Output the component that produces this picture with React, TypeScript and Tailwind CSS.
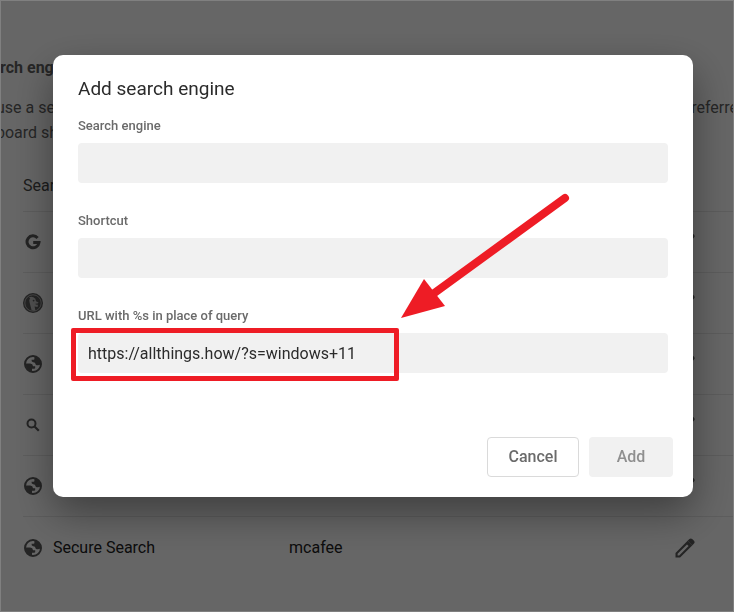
import { useState, type ReactNode } from "react";

interface Engine {
  id: number;
  icon: ReactNode;
  name?: string;
  shortcut?: string;
}

function GoogleIcon() {
  return (
    <svg viewBox="0 0 16 16" className="h-4 w-4" fill="none" stroke="currentColor" strokeWidth="3">
      <path d="M12.6 3.9A6 6 0 1 0 14 8.6H8.2" />
    </svg>
  );
}

function DuckIcon() {
  return (
    <svg viewBox="0 0 20 20" className="h-5 w-5">
      <circle cx="10" cy="10" r="10" fill="currentColor" />
      <circle cx="10" cy="10" r="8.2" fill="none" stroke="#c4c4c4" strokeWidth="0.8" />
      <path
        d="M6 4.6Q8 3.2 10.4 4.2 13 5.2 13 8.2L15.6 9.6Q15.4 10.8 12.2 10.8 12.4 12 15 11.8L14.6 14 11.6 13.6 12.4 17.4Q10.6 18 8.6 17.3L6.6 9.6Q5.6 6.8 7.2 5.6Z"
        fill="#c4c4c4"
      />
      <circle cx="10.6" cy="7.6" r="0.9" fill="currentColor" />
    </svg>
  );
}

function GlobeIcon() {
  return (
    <svg viewBox="0 0 18 18" className="h-[18px] w-[18px]" fill="currentColor">
      <circle cx="9" cy="9" r="8" fill="none" stroke="currentColor" strokeWidth="2" />
      <path d="M1.5 8.6H6.2Q8.9 8.8 9 11.2H11.2V13.2Q10.6 13.9 8 13.8V16.5Q1.5 15.5 1.5 8.6Z" />
      <path d="M10.4 1.5V4.3Q9.8 5 7.5 4.8 7.3 7 9.2 7.2 11.6 7.3 11.6 9.4 13.4 11.2 16.6 9.6 17 3 10.4 1.5Z" />
    </svg>
  );
}

function SearchIcon() {
  return (
    <svg viewBox="0 0 14 14" className="h-3.5 w-3.5" fill="none" stroke="currentColor" strokeWidth="2">
      <circle cx="5.5" cy="5.5" r="4" />
      <path d="M8.5 8.5 12.8 12.8" strokeWidth="2.2" />
    </svg>
  );
}

function PencilIcon() {
  return (
    <svg viewBox="0 0 20 20" className="h-5 w-5" fill="currentColor">
      <path
        fillRule="evenodd"
        d="M0.5 14.9 12.6 2.8 17.2 7.4 5.1 19.5H0.5ZM2.6 15.8V17.4H4.2L13.6 8 12 6.4Z"
      />
      <path d="M12.6 2.8 14.4 1Q15.8-0.2 17.2 1L19 2.8Q20.2 4.2 19 5.6L17.2 7.4Z" />
    </svg>
  );
}

const engines: Engine[] = [
  { id: 1, icon: <GoogleIcon /> },
  { id: 2, icon: <DuckIcon /> },
  { id: 3, icon: <GlobeIcon /> },
  { id: 4, icon: <SearchIcon /> },
  { id: 5, icon: <GlobeIcon /> },
  { id: 6, icon: <GlobeIcon />, name: "Secure Search", shortcut: "mcafee" },
];

function SettingsPage() {
  return (
    <main className="min-h-screen overflow-hidden bg-white pt-14 text-base text-[#5f5f5f]">
      <h1 className="leading-6 font-bold">rch eng</h1>
      <div className="mt-[15px] flex justify-between leading-[25px] whitespace-nowrap">
        <p className="-ml-1">
          use a se
          <br />
          board sh
        </p>
        <p className="-mr-1">referre</p>
      </div>

      <div className="mt-4 pl-[23px]">
        <table className="w-full table-fixed border-separate border-spacing-0 text-left">
          <colgroup>
            <col className="w-[30px]" />
            <col className="w-[236px]" />
            <col />
            <col className="w-[59px]" />
          </colgroup>
          <thead>
            <tr className="*:h-[51px] *:border-b *:border-[#e8e8e8]">
              <th colSpan={2} className="font-normal text-[#484848]">
                Sear
              </th>
              <th />
              <th />
            </tr>
          </thead>
          <tbody className="text-[#222222]">
            {engines.map((engine) => (
              <tr key={engine.id} className="*:h-[61px] *:border-b *:border-[#e8e8e8] last:*:border-b-0">
                <td className="text-[#5a5a5a]">
                  <span className="flex w-5 justify-center *:shrink-0">{engine.icon}</span>
                </td>
                <td>{engine.name}</td>
                <td>{engine.shortcut}</td>
                <td className="text-[#5a5a5a]">
                  <button type="button" aria-label="Edit" className="flex">
                    <PencilIcon />
                  </button>
                </td>
              </tr>
            ))}
          </tbody>
        </table>
      </div>
    </main>
  );
}

interface FieldProps {
  id: string;
  label: string;
  value: string;
  onChange: (value: string) => void;
  children?: ReactNode;
}

function Field({ id, label, value, onChange, children }: FieldProps) {
  return (
    <div>
      <label htmlFor={id} className="mb-[7px] block text-[13px] leading-5 font-medium text-[#6a6a6a]">
        {label}
      </label>
      <div className="relative">
        <input
          id={id}
          type="text"
          value={value}
          onChange={(e) => onChange(e.target.value)}
          className="block h-10 w-full rounded bg-[#f1f1f1] px-2.5 text-base text-[#2b2b2b] outline-none"
        />
        {children}
      </div>
    </div>
  );
}

export default function App() {
  const [name, setName] = useState("");
  const [shortcut, setShortcut] = useState("");
  const [url, setUrl] = useState("https://allthings.how/?s=windows+11");

  return (
    <div className="font-[Roboto,sans-serif]">
      <SettingsPage />

      <div className="fixed inset-0 flex items-start justify-center overflow-hidden border border-[#808080] bg-black/60 pt-[54px] pl-3">
        <form
          role="dialog"
          aria-labelledby="dialog-title"
          onSubmit={(e) => e.preventDefault()}
          className="w-full max-w-[640px] rounded-[10px] bg-white py-5 shadow-[0_16px_40px_rgba(0,0,0,0.4)]"
        >
          <h2 id="dialog-title" className="px-[25px] text-[19px] leading-7 text-[#2b2b2b]">
            Add search engine
          </h2>

          <div className="mt-[13px] flex flex-col gap-7 px-[25px]">
            <Field id="engine-name" label="Search engine" value={name} onChange={setName} />
            <Field id="engine-shortcut" label="Shortcut" value={shortcut} onChange={setShortcut} />
            <Field id="engine-url" label="URL with %s in place of query" value={url} onChange={setUrl}>
              {/* Callout: frame around the url and the arrow that points at it */}
              <div className="pointer-events-none absolute -top-[5px] -left-[7px] h-[53px] w-[328px] rounded-xs border-5 border-[#ee1c25]" />
              <svg
                viewBox="0 0 172 128"
                className="pointer-events-none absolute bottom-full left-[321px] mb-3 h-32 w-[172px]"
              >
                <line x1="34" y1="101" x2="166" y2="5" stroke="#ee1c25" strokeWidth="8" strokeLinecap="round" />
                <polygon points="2,125 25,86 46,113" fill="#ee1c25" />
              </svg>
            </Field>
          </div>

          <div className="mt-16 flex justify-end gap-2.5 px-5 text-base font-medium">
            <button type="button" className="h-10 w-[92px] rounded border border-[#dadada] text-[#6b6b6b]">
              Cancel
            </button>
            <button type="submit" disabled className="h-10 w-[84px] rounded bg-[#f1f1f1] text-[#8f8f8f]">
              Add
            </button>
          </div>
        </form>
      </div>
    </div>
  );
}
